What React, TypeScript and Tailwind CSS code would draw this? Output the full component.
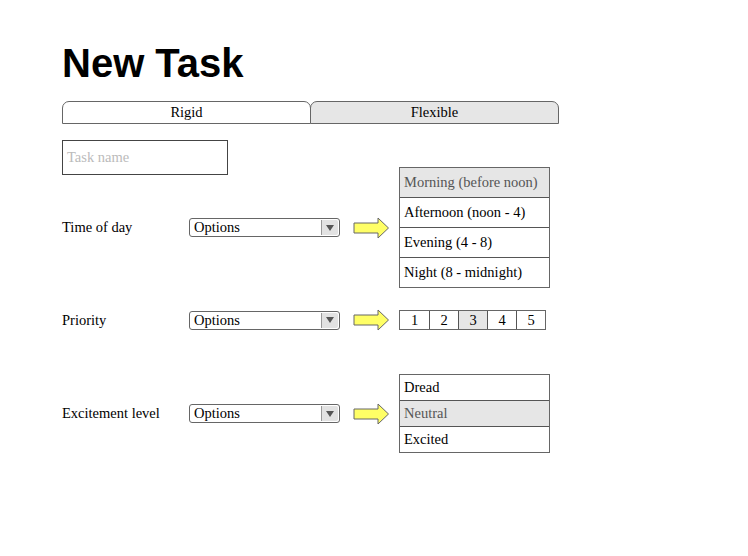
import React from "react";

const serif = { fontFamily: '"Liberation Serif", "DejaVu Serif", serif' };

function Select() {
  return (
    <div className="flex h-[19px] w-[151px] items-stretch rounded-[3px] border border-[#666] bg-white">
      <div className="flex flex-1 items-center pl-[4px] text-[14.5px] leading-none text-black">Options</div>
      <div className="my-[1px] mr-[1px] flex w-[17px] items-center justify-center rounded-r-[2px] border-l border-[#999] bg-[#e2e2e2]">
        <svg width="8" height="6" viewBox="0 0 8 6">
          <path d="M0 0 L8 0 L4 6 Z" fill="#555" />
        </svg>
      </div>
    </div>
  );
}

function Arrow() {
  return (
    <svg width="37" height="22" viewBox="0 0 37 22" className="ml-[13px] mr-[9px] shrink-0">
      <path
        d="M1 6 L25 6 L25 1 L35.5 11 L25 21 L25 16 L1 16 Z"
        fill="#ffff66"
        stroke="#666"
        strokeWidth="1"
        strokeLinejoin="miter"
      />
    </svg>
  );
}

function List({
  items,
  selected,
  firstH,
  rowH,
}: {
  items: string[];
  selected: number;
  firstH: string;
  rowH: string;
}) {
  return (
    <div className="flex w-[151px] flex-col border border-[#666]">
      {items.map((it, i) => (
        <div
          key={it}
          className={`flex items-center pl-[4px] text-[14.5px] leading-none ${i === 0 ? firstH : rowH} ${
            i > 0 ? "border-t border-[#555]" : ""
          } ${i === selected ? "bg-[#e6e6e6] text-[#555]" : "bg-white text-black"}`}
        >
          {it}
        </div>
      ))}
    </div>
  );
}

function Row({ label, children, className }: { label: string; children: React.ReactNode; className?: string }) {
  return (
    <div className={`flex items-center ${className ?? ""}`}>
      <div className="w-[127px] text-[14.5px] leading-none text-black">{label}</div>
      <Select />
      <Arrow />
      {children}
    </div>
  );
}

export default function App() {
  return (
    <div className="min-h-[556px] w-[748px] bg-white pl-[62px] pt-[43px]" style={serif}>
      <h1
        className="text-[40px] font-bold leading-none text-black"
        style={{ fontFamily: '"Liberation Sans", Arial, sans-serif' }}
      >
        New Task
      </h1>
      <div className="mt-[18px] flex w-[497px]">
        <div className="flex h-[23px] flex-1 items-center justify-center rounded-t-[7px] border border-[#666] bg-white text-[14.5px] text-black">
          Rigid
        </div>
        <div className="-ml-px flex h-[23px] flex-1 items-center justify-center rounded-t-[7px] border border-[#666] bg-[#e6e6e6] text-[14.5px] text-black">
          Flexible
        </div>
      </div>
      <div className="mt-[16px] flex h-[35px] w-[166px] items-center border border-[#444] pl-[4px] text-[14.5px] text-[#bbb]">
        Task name
      </div>
      <Row label="Time of day" className="-mt-[8px]">
        <List
          items={["Morning (before noon)", "Afternoon (noon - 4)", "Evening (4 - 8)", "Night (8 - midnight)"]}
          selected={0}
          firstH="h-[29px]"
          rowH="h-[30px]"
        />
      </Row>
      <Row label="Priority" className="mt-[21px]">
        <div className="flex h-[20px] border border-[#666]">
          {["1", "2", "3", "4", "5"].map((n, i) => (
            <div
              key={n}
              className={`flex w-[29px] items-center justify-center text-[14.5px] leading-none text-black ${
                i > 0 ? "border-l border-[#555]" : ""
              } ${i === 2 ? "bg-[#e6e6e6]" : "bg-white"}`}
            >
              {n}
            </div>
          ))}
        </div>
      </Row>
      <Row label="Excitement level" className="mt-[43px]">
        <List items={["Dread", "Neutral", "Excited"]} selected={1} firstH="h-[25px]" rowH="h-[26px]" />
      </Row>
    </div>
  );
}
